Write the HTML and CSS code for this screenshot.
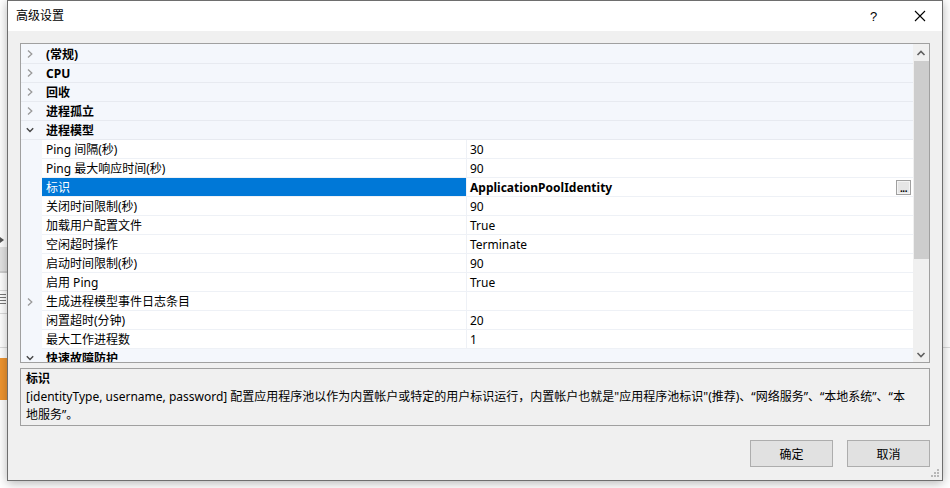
FILE: index.html
```html
<!DOCTYPE html>
<html lang="zh-CN">
<head>
<meta charset="utf-8">
<title>高级设置</title>
<link rel="stylesheet" href="styles.css">
</head>
<body>
<div class="desktop">
  <div class="backdrop">
    <div class="bd-arrow"></div>
    <div class="bd-band"></div>
    <div class="bd-line bd-l1"></div>
    <div class="bd-line bd-l2"></div>
    <div class="bd-icon"></div>
    <div class="bd-line bd-l3"></div>
    <div class="bd-orange"></div>
  </div>

  <div class="dialog">
    <div class="titlebar">
      <span class="title">高级设置</span>
      <span class="help">?</span>
      <svg class="close" width="12" height="12" viewBox="0 0 12 12"><path d="M1 1 L11 11 M11 1 L1 11" stroke="#000" stroke-width="1.1" fill="none"/></svg>
    </div>

    <div class="body">
      <div class="grid">
        <div class="rows">
          <div class="row cat"><span class="gut"><svg class="chev" viewBox="0 0 10 10"><polyline class="chev-r" points="2,1.5 5.8,5 2,8.5"/></svg></span><span class="label">(常规)</span></div>
          <div class="row cat"><span class="gut"><svg class="chev" viewBox="0 0 10 10"><polyline class="chev-r" points="2,1.5 5.8,5 2,8.5"/></svg></span><span class="label">CPU</span></div>
          <div class="row cat"><span class="gut"><svg class="chev" viewBox="0 0 10 10"><polyline class="chev-r" points="2,1.5 5.8,5 2,8.5"/></svg></span><span class="label">回收</span></div>
          <div class="row cat"><span class="gut"><svg class="chev" viewBox="0 0 10 10"><polyline class="chev-r" points="2,1.5 5.8,5 2,8.5"/></svg></span><span class="label">进程孤立</span></div>
          <div class="row cat"><span class="gut"><svg class="chev" viewBox="0 0 10 10"><polyline class="chev-d" points="0.8,3.2 4,6.4 7.2,3.2"/></svg></span><span class="label">进程模型</span></div>

          <div class="row prop"><span class="gut"></span><span class="name">Ping 间隔(秒)</span><span class="val">30</span></div>
          <div class="row prop"><span class="gut"></span><span class="name">Ping 最大响应时间(秒)</span><span class="val">90</span></div>
          <div class="row prop sel"><span class="gut"></span><span class="name">标识</span><span class="val"><b>ApplicationPoolIdentity</b><span class="dots">...</span></span></div>
          <div class="row prop"><span class="gut"></span><span class="name">关闭时间限制(秒)</span><span class="val">90</span></div>
          <div class="row prop"><span class="gut"></span><span class="name">加载用户配置文件</span><span class="val">True</span></div>
          <div class="row prop"><span class="gut"></span><span class="name">空闲超时操作</span><span class="val">Terminate</span></div>
          <div class="row prop"><span class="gut"></span><span class="name">启动时间限制(秒)</span><span class="val">90</span></div>
          <div class="row prop"><span class="gut"></span><span class="name">启用 Ping</span><span class="val">True</span></div>
          <div class="row prop"><span class="gut"><svg class="chev" viewBox="0 0 10 10"><polyline class="chev-r" points="2,1.5 5.8,5 2,8.5"/></svg></span><span class="name">生成进程模型事件日志条目</span><span class="val"></span></div>
          <div class="row prop"><span class="gut"></span><span class="name">闲置超时(分钟)</span><span class="val">20</span></div>
          <div class="row prop"><span class="gut"></span><span class="name">最大工作进程数</span><span class="val">1</span></div>

          <div class="row cat"><span class="gut"><svg class="chev" viewBox="0 0 10 10"><polyline class="chev-d" points="0.8,3.2 4,6.4 7.2,3.2"/></svg></span><span class="label">快速故障防护</span></div>
        </div>
        <div class="scrollbar">
          <div class="sb-btn"><svg width="16" height="16" viewBox="0 0 16 16"><polyline points="4.5,10 8,6.5 11.5,10" fill="none" stroke="#606060" stroke-width="1.6"/></svg></div>
          <div class="sb-track"><div class="sb-thumb"></div></div>
          <div class="sb-btn"><svg width="16" height="16" viewBox="0 0 16 16"><polyline points="4.5,7 8,10.5 11.5,7" fill="none" stroke="#606060" stroke-width="1.6"/></svg></div>
        </div>
      </div>

      <div class="desc">
        <div class="desc-title">标识</div>
        <div class="desc-text">[identityType, username, password] 配置应用程序池以作为内置帐户或特定的用户标识运行，内置帐户也就是"应用程序池标识"(推荐)、“网络服务”、“本地系统”、“本<br>地服务”。</div>
      </div>

      <div class="buttons">
        <button class="btn">确定</button>
        <button class="btn">取消</button>
      </div>
    </div>

    <svg class="grip" width="10" height="10" viewBox="0 0 10 10">
      <rect x="7" y="1" width="2" height="2" fill="#b8b8b8"/>
      <rect x="4" y="4" width="2" height="2" fill="#b8b8b8"/>
      <rect x="7" y="4" width="2" height="2" fill="#b8b8b8"/>
      <rect x="1" y="7" width="2" height="2" fill="#b8b8b8"/>
      <rect x="4" y="7" width="2" height="2" fill="#b8b8b8"/>
      <rect x="7" y="7" width="2" height="2" fill="#b8b8b8"/>
    </svg>
  </div>
</div>
</body>
</html>
```

FILE: styles.css
```css
* { box-sizing: border-box; }

html, body {
  margin: 0;
  padding: 0;
  background: #ffffff;
}

body {
  font-family: "Noto Sans", "Noto Sans CJK SC", sans-serif;
  font-size: 12px;
  color: #000;
}

.desktop {
  position: relative;
  width: 950px;
  height: 488px;
  overflow: hidden;
  padding-left: 7px;
  background: #ffffff;
}

/* background application peeking out behind the dialog */
.backdrop {
  position: absolute;
  left: 0;
  top: 0;
  width: 950px;
  height: 488px;
}
.bd-arrow {
  position: absolute;
  left: 0;
  top: 237px;
  width: 0;
  height: 0;
  border-top: 3px solid transparent;
  border-bottom: 3px solid transparent;
  border-left: 4px solid #555;
}
.bd-band {
  position: absolute;
  left: 0;
  top: 247px;
  width: 10px;
  height: 26px;
  background: #e4e4e4;
  border-bottom: 2px solid #cfcfcf;
}
.bd-line {
  position: absolute;
  left: 0;
  height: 1px;
  background: #dcdcdc;
}
.bd-l1 { top: 290px; width: 10px; }
.bd-l2 { top: 313px; width: 10px; }
.bd-l3 { top: 347px; width: 950px; }
.bd-icon {
  position: absolute;
  left: 0;
  top: 294px;
  width: 6px;
  height: 12px;
  background:
    repeating-linear-gradient(to bottom, #777 0 1px, transparent 1px 3px);
}
.bd-orange {
  position: absolute;
  left: 0;
  top: 358px;
  width: 10px;
  height: 42px;
  background: #f0952f;
}

/* dialog window */
.dialog {
  position: relative;
  width: 936px;
  height: 481px;
  border: 1px solid #6e6e6e;
  background: #f0f0f0;
  box-shadow: 0 2px 10px rgba(0, 0, 0, 0.3);
  display: flex;
  flex-direction: column;
}

.titlebar {
  height: 30px;
  flex: none;
  background: #ffffff;
  display: flex;
  align-items: center;
  padding-left: 8px;
}
.title {
  flex: 1;
  line-height: 30px;
}
.help {
  font-family: "Liberation Sans", sans-serif;
  font-size: 13px;
  width: 10px;
  margin-right: 34px;
  color: #000;
}
.close {
  margin-right: 16px;
  display: block;
}

.body {
  flex: 1;
  padding: 12px 12px 13px 12px;
  display: flex;
  flex-direction: column;
}

/* property grid */
.grid {
  height: 320px;
  flex: none;
  border: 1px solid #a0a0a0;
  display: flex;
  background: #f4f7fc;
}
.rows {
  flex: 1;
  overflow: hidden;
  padding-top: 1px;
  background: #f4f7fc;
}
.row {
  height: 19px;
  display: flex;
  align-items: stretch;
  line-height: 18px;
  white-space: nowrap;
}
.gut {
  width: 21px;
  flex: none;
  padding-left: 5px;
  display: flex;
  align-items: center;
}
.chev {
  width: 10px;
  height: 10px;
  display: block;
}
.chev-r {
  fill: none;
  stroke: #999999;
  stroke-width: 1.3;
}
.chev-d {
  fill: none;
  stroke: #444444;
  stroke-width: 1.4;
}

.cat {
  border-bottom: 1px solid #e7eaf0;
  background: #f4f7fc;
}
.cat .label {
  font-weight: bold;
  padding-left: 4px;
  padding-top: 1px;
}

.prop .name {
  width: 424px;
  flex: none;
  background: #ffffff;
  padding-left: 4px;
  padding-top: 1px;
  border-bottom: 1px solid #eef1f6;
}
.prop .val {
  flex: 1;
  background: #ffffff;
  border-left: 1px solid #eef1f6;
  border-bottom: 1px solid #eef1f6;
  padding-left: 3px;
  padding-top: 1px;
  line-height: 18px;
  display: flex;
  align-items: flex-start;
}
.sel .name {
  background: #0078d7;
  color: #ffffff;
}
.val b {
  flex: 1;
}
.dots {
  width: 15px;
  height: 15px;
  margin-right: 2px;
  margin-top: 1px;
  border: 1px solid #a0a0a0;
  background: #e6e6e6;
  box-shadow: inset 0 0 0 1px #f4f4f4;
  display: flex;
  justify-content: center;
  align-items: flex-end;
  padding-bottom: 2px;
  font-size: 10px;
  line-height: 6px;
  font-weight: bold;
  letter-spacing: -0.5px;
  font-family: "Liberation Sans", sans-serif;
}

.scrollbar {
  width: 16px;
  flex: none;
  background: #f0f0f0;
  display: flex;
  flex-direction: column;
}
.sb-btn {
  height: 17px;
  flex: none;
  display: flex;
  align-items: center;
  justify-content: center;
}
.sb-btn svg { display: block; }
.sb-track {
  flex: 1;
  padding: 0 0 0 1px;
}
.sb-thumb {
  height: 198px;
  background: #cdcdcd;
}

/* description */
.desc {
  margin-top: 5px;
  height: 58px;
  flex: none;
  border: 1px solid #a0a0a0;
  padding: 1px 5px 0 5px;
  line-height: 18px;
}
.desc-title {
  font-weight: bold;
}

/* buttons */
.buttons {
  margin-top: 14px;
  display: flex;
  justify-content: flex-end;
  gap: 14px;
}
.btn {
  width: 83px;
  height: 27px;
  border: 1px solid #adadad;
  background: #e1e1e1;
  font-family: "Noto Sans", "Noto Sans CJK SC", sans-serif;
  font-size: 12px;
  color: #000;
  padding: 0;
  margin: 0;
}

.grip {
  position: absolute;
  right: 2px;
  bottom: 2px;
}
```
